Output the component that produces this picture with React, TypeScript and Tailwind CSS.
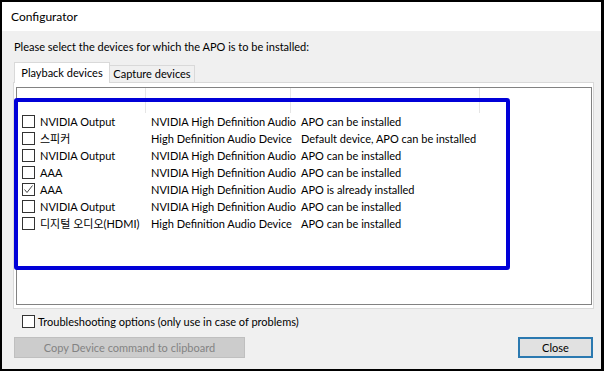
const rows = [
  { name: "NVIDIA Output", device: "NVIDIA High Definition Audio", status: "APO can be installed", checked: false },
  { name: "스피커", device: "High Definition Audio Device", status: "Default device, APO can be installed", checked: false },
  { name: "NVIDIA Output", device: "NVIDIA High Definition Audio", status: "APO can be installed", checked: false },
  { name: "AAA", device: "NVIDIA High Definition Audio", status: "APO can be installed", checked: false },
  { name: "AAA", device: "NVIDIA High Definition Audio", status: "APO is already installed", checked: true },
  { name: "NVIDIA Output", device: "NVIDIA High Definition Audio", status: "APO can be installed", checked: false },
  { name: "디지털 오디오(HDMI)", device: "High Definition Audio Device", status: "APO can be installed", checked: false },
];

const CheckBox = ({ checked }: { checked: boolean }) => (
  <div className="w-[13px] h-[13px] border border-[#333333] bg-white flex items-center justify-center shrink-0">
    {checked && (
      <svg width="11" height="11" viewBox="0 0 11 11">
        <polyline points="1.5,5.5 4,8.5 9.5,1.5" fill="none" stroke="#444" strokeWidth="1" />
      </svg>
    )}
  </div>
);

const App = () => {
  return (
    <div
      className="relative w-[604px] h-[371px] flex flex-col bg-[#f0f0f0] border-t-2 border-l-2 border-r-[3px] border-b-2 border-black text-[11px] text-black leading-[16px]"
      style={{ fontFamily: 'Lato, "Noto Sans CJK KR", sans-serif' }}
    >
      {/* Title bar */}
      <div className="h-[29px] bg-white flex items-center pl-[9px] text-[12px]">Configurator</div>

      {/* Body */}
      <div className="flex flex-col pl-[11px] pr-[8px]">
        <div className="mt-[8px] pl-[1px] whitespace-nowrap">Please select the devices for which the APO is to be installed:</div>

        {/* Tabs */}
        <div className="flex items-end mt-[7px] pl-[1px] h-[21px] relative z-10 -mb-px">
          <div className="w-[96px] h-[21px] bg-white border border-[#d9d9d9] border-b-0 flex items-center justify-center whitespace-nowrap">
            Playback devices
          </div>
          <div className="w-[85px] h-[17px] border border-[#d9d9d9] border-b-0 border-l-0 flex items-center justify-center mb-px whitespace-nowrap">
            Capture devices
          </div>
        </div>

        {/* Tab panel */}
        <div className="w-[581px] h-[227px] bg-white border border-[#d9d9d9] pt-[4px] pl-[2px] pr-[1px] pb-[3px]">
          <div className="h-full border border-[#828282] flex flex-col">
            <div className="h-[25px] flex shrink-0">
              <div className="w-[129px] border-r border-[#e5e5e5]" />
              <div className="w-[145px] border-r border-[#e5e5e5]" />
              <div className="w-[189px] border-r border-[#e5e5e5]" />
            </div>
            {rows.map((r, i) => (
              <div key={i} className="h-[17px] flex items-center">
                <div className="w-[129px] flex items-center pl-[5px] gap-[5px]">
                  <CheckBox checked={r.checked} />
                  <span className="whitespace-nowrap">{r.name}</span>
                </div>
                <div className="w-[145px] pl-[5px] whitespace-nowrap">{r.device}</div>
                <div className="pl-[10px] whitespace-nowrap">{r.status}</div>
              </div>
            ))}
          </div>
        </div>

        {/* Troubleshooting */}
        <div className="flex items-center mt-[6px] pl-[9px] gap-[3px] h-[13px]">
          <CheckBox checked={false} />
          <span className="whitespace-nowrap">Troubleshooting options (only use in case of problems)</span>
        </div>

        {/* Buttons */}
        <div className="flex justify-between mt-[9px] pl-[1px]">
          <div className="w-[231px] h-[21px] bg-[#cccccc] border border-[#bfbfbf] flex items-center justify-center text-[#838383] whitespace-nowrap">
            Copy Device command to clipboard
          </div>
          <div className="w-[75px] h-[21px] bg-[#e1e1e1] border-2 border-[#2b79b0] flex items-center justify-center">
            Close
          </div>
        </div>
      </div>

      {/* Annotation rectangle */}
      <div className="absolute left-[12px] top-[96px] w-[496px] h-[172px] border-[4px] border-[#0000d8] rounded-[3px] pointer-events-none" />
    </div>
  );
};

export default App;
